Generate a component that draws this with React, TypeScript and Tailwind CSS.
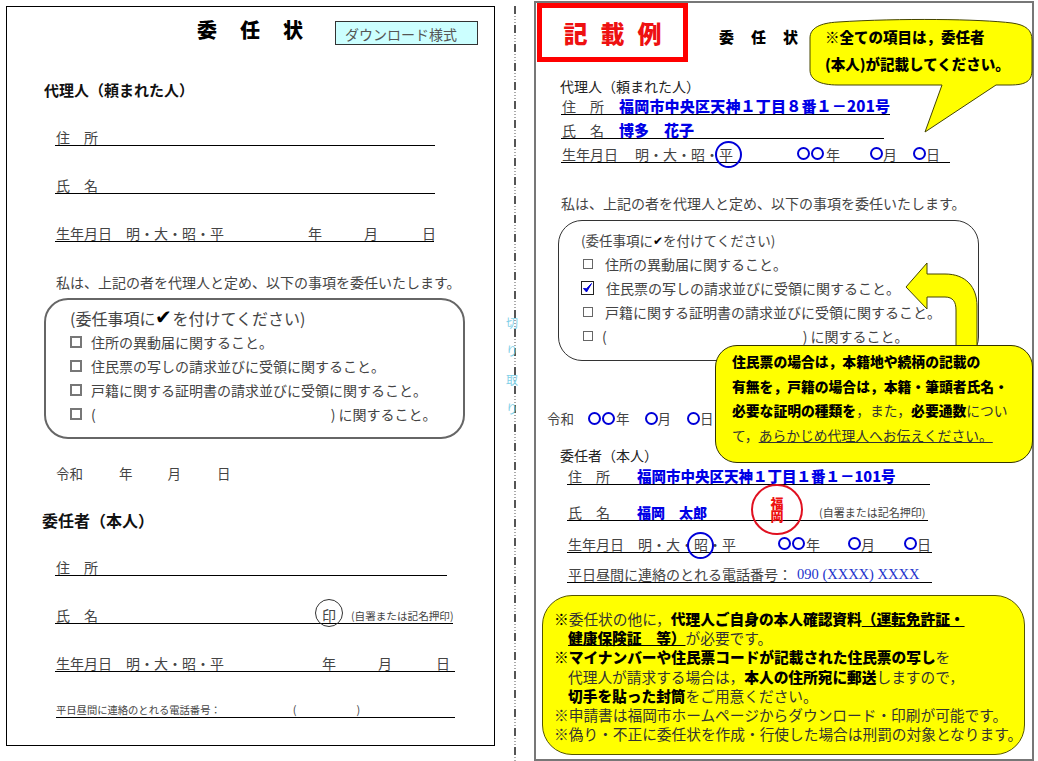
import React from "react";

function Line({ w, ml, mt, h, children }: { w: string; ml: string; mt: string; h: string; children: React.ReactNode }) {
  return <div className={`flex items-end ${w} ${ml} ${mt} ${h} border-b border-black text-[14px] leading-[16px] text-[#444] whitespace-pre`}>{children}</div>;
}

function Box() {
  return <span className="inline-block w-[12px] h-[12px] border-2 border-[#777] shrink-0" />;
}

function SmallBox() {
  return <span className="inline-block w-[10px] h-[10px] border border-[#666] shrink-0" />;
}

function Maru({ ml }: { ml: string }) {
  return <span className={`inline-block w-[13px] h-[13px] rounded-full border-2 border-[#0000d8] shrink-0 mb-[2px] ${ml}`} />;
}

function MaruC({ ml }: { ml: string }) {
  return <span className={`inline-block w-[13px] h-[13px] rounded-full border-2 border-[#0000d8] shrink-0 ${ml}`} />;
}

function Ring({ cls }: { cls: string }) {
  return <div className={`absolute rounded-full ${cls}`} />;
}

function Cut({ t, cls }: { t: string; cls: string }) {
  return <span className={`absolute left-[506px] text-[12px] leading-none text-[#7fd0e8] ${cls}`}>{t}</span>;
}

function B({ children }: { children: React.ReactNode }) {
  return <b className="font-black text-black">{children}</b>;
}

export default function App() {
  return (
    <div className="relative w-[1038px] h-[761px] overflow-hidden bg-white flex items-start font-['Noto_Sans_CJK_JP','Liberation_Sans',sans-serif]">
      {/* Left sheet */}
      <section className="ml-[6px] mt-[6px] w-[489px] h-[740px] border border-black shrink-0 flex flex-col">
        <div className="mt-[14px] h-[24px] flex items-center">
          <h1 className="ml-[190px] flex gap-[23px] text-[20px] font-black text-black leading-none -mt-[6px]">
            <span>委</span><span>任</span><span>状</span>
          </h1>
          <div className="ml-[32px] w-[143px] h-[24px] border border-[#333] bg-[#ccffff] text-[14px] leading-[24px] pl-[9px] text-[#555] whitespace-nowrap">ダウンロード様式</div>
        </div>
        <h2 className="ml-[37px] mt-[35px] h-[20px] text-[15px] leading-[20px] font-semibold text-[#111]">代理人（頼まれた人）</h2>
        <Line w="w-[380px]" ml="ml-[48px]" mt="mt-[24px]" h="h-[22px]"><span className="ml-px">住</span><span className="ml-[14px]">所</span></Line>
        <Line w="w-[380px]" ml="ml-[48px]" mt="mt-[26px]" h="h-[22px]"><span className="ml-px">氏</span><span className="ml-[14px]">名</span></Line>
        <Line w="w-[379px]" ml="ml-[48px]" mt="mt-[26px]" h="h-[22px]">
          <span className="ml-px">生年月日</span><span className="ml-[14px]">明・大・昭・平</span><span className="ml-[84px]">年</span><span className="ml-[42px]">月</span><span className="ml-[44px]">日</span>
        </Line>
        <p className="ml-[49px] mt-[30px] h-[20px] text-[14px] leading-[20px] text-[#444] whitespace-nowrap">私は、上記の者を代理人と定め、以下の事項を委任いたします。</p>
        <div className="ml-[37px] mt-[6px] w-[421px] h-[141px] border-2 border-[#666] rounded-[24px] pl-[24px] pt-[7px] text-[14px] text-[#444] flex flex-col shrink-0">
          <div className="flex items-center h-[22px] text-[16px] whitespace-nowrap">(委任事項に<span className="text-black text-[20px] leading-none -mt-[4px]">✔</span>を付けてください)</div>
          <div className="flex items-center h-[24px] mt-[1px] gap-[9px]"><Box />住所の異動届に関すること。</div>
          <div className="flex items-center h-[24px] gap-[9px]"><Box />住民票の写しの請求並びに受領に関すること。</div>
          <div className="flex items-center h-[24px] gap-[9px]"><Box />戸籍に関する証明書の請求並びに受領に関すること。</div>
          <div className="flex items-center h-[24px] gap-[9px]"><Box />(<span className="ml-[226px]">) に関すること。</span></div>
        </div>
        <div className="ml-[49px] mt-[24px] h-[20px] flex items-center text-[13.5px] text-[#444]"><span>令和</span><span className="ml-[36px]">年</span><span className="ml-[35px]">月</span><span className="ml-[36px]">日</span></div>
        <h2 className="ml-[35px] mt-[26px] h-[22px] text-[16px] leading-[22px] font-semibold text-[#111]">委任者（本人）</h2>
        <Line w="w-[392px]" ml="ml-[48px]" mt="mt-[23px]" h="h-[22px]"><span className="ml-px">住</span><span className="ml-[14px]">所</span></Line>
        <Line w="w-[398px]" ml="ml-[48px]" mt="mt-[26px]" h="h-[22px]">
          <span className="ml-px">氏</span><span className="ml-[14px]">名</span>
          <span className="ml-[224px]">印</span>
          <span className="ml-[15px] text-[10.6px] leading-[15px]">(自署または記名押印)</span>
        </Line>
        <Line w="w-[400px]" ml="ml-[48px]" mt="mt-[26px]" h="h-[22px]">
          <span className="ml-px">生年月日</span><span className="ml-[14px]">明・大・昭・平</span><span className="ml-[98px]">年</span><span className="ml-[42px]">月</span><span className="ml-[44px]">日</span>
        </Line>
        <Line w="w-[399px]" ml="ml-[49px]" mt="mt-[24px]" h="h-[22px]">
          <span className="text-[10.3px] leading-[15px]">平日昼間に連絡のとれる電話番号：</span><span className="ml-[72px] text-[11px] leading-[15px]">(</span><span className="ml-[60px] text-[11px] leading-[15px]">)</span>
        </Line>
      </section>

      {/* Cut line */}
      <div className="ml-[19px] mt-[6px] w-[2px] h-[755px] shrink-0 bg-[repeating-linear-gradient(to_bottom,#555_0,#555_8px,transparent_8px,transparent_10px,#aaa_10px,#aaa_11px,transparent_11px,transparent_13px,#aaa_13px,#aaa_14px,transparent_14px,transparent_16px,#aaa_16px,#aaa_17px,transparent_17px,transparent_19px)]" />

      {/* Right sheet */}
      <section className="ml-[18px] mt-[1px] w-[500px] h-[760px] border-2 border-[#777] shrink-0 flex flex-col">
        <div className="flex items-start h-[59px] shrink-0">
          <div className="ml-px w-[151px] h-[59px] border-[5px] border-[#ff0000] flex justify-center items-center gap-[13px] text-[24px] font-black text-[#ee1111] leading-none">
            <span>記</span><span>載</span><span>例</span>
          </div>
          <h1 className="ml-[31px] mt-[26px] flex gap-[17px] text-[15px] leading-none font-black text-black"><span>委</span><span>任</span><span>状</span></h1>
        </div>
        <h2 className="ml-[24px] mt-[15px] h-[18px] text-[14px] leading-[18px] text-[#222] shrink-0">代理人（頼まれた人）</h2>
        <Line w="w-[329px]" ml="ml-[25px]" mt="mt-0" h="h-[20px]"><span className="ml-px">住</span><span className="ml-[14px]">所</span><span className="ml-[15px] font-black text-[#0000e6] text-[15px] tracking-[0.2px]">福岡市中央区天神１丁目８番１－201号</span></Line>
        <Line w="w-[323px]" ml="ml-[25px]" mt="mt-0" h="h-[24px]"><span className="ml-px">氏</span><span className="ml-[14px]">名</span><span className="ml-[15px] font-black text-[#0000e6] text-[15px]">博多　花子</span></Line>
        <Line w="w-[389px]" ml="ml-[25px]" mt="mt-0" h="h-[24px]">
          <span className="ml-px">生年月日</span><span className="ml-[17px]">明・大・昭・平</span>
          <Maru ml="ml-[64px]" /><Maru ml="ml-px" /><span className="ml-[2px]">年</span>
          <Maru ml="ml-[30px]" /><span>月</span>
          <Maru ml="ml-[16px]" /><span>日</span>
        </Line>
        <p className="ml-[25px] mt-[30px] h-[20px] text-[14px] leading-[20px] text-[#444] whitespace-nowrap shrink-0">私は、上記の者を代理人と定め、以下の事項を委任いたします。</p>
        <div className="ml-[22px] mt-[7px] w-[421px] h-[141px] border-[1.5px] border-[#333] rounded-[24px] pl-[22px] pt-[8px] text-[14px] text-[#444] flex flex-col shrink-0">
          <div className="flex items-center h-[22px] text-[13.5px] whitespace-nowrap">(委任事項に<span className="text-black text-[12px] leading-none">✔</span>を付けてください)</div>
          <div className="flex items-center h-[24px] mt-[1px] pl-[2px] gap-[12px]"><SmallBox />住所の異動届に関すること。</div>
          <div className="flex items-center h-[24px] gap-[12px]">
            <svg width="13" height="14" viewBox="0 0 13 14" className="shrink-0"><rect x="0.5" y="0.5" width="12" height="13" fill="white" stroke="#222" /><path d="M2.5 7.5 L5.5 11 L10.5 2.5 L5.5 7.8 Z" fill="#0000d8" stroke="#0000d8" strokeWidth="1" /></svg>
            住民票の写しの請求並びに受領に関すること。
          </div>
          <div className="flex items-center h-[24px] pl-[2px] gap-[12px]"><SmallBox />戸籍に関する証明書の請求並びに受領に関すること。</div>
          <div className="flex items-center h-[24px] pl-[2px] gap-[9px]"><SmallBox />(<span className="ml-[187px]">) に関すること。</span></div>
        </div>
        <div className="ml-[11px] mt-[47px] h-[20px] flex items-center text-[13.5px] text-[#444] shrink-0 whitespace-pre">
          <span>令和</span><MaruC ml="ml-[14px]" /><MaruC ml="ml-px" /><span className="ml-px">年</span>
          <MaruC ml="ml-[15px]" /><span>月</span><MaruC ml="ml-[16px]" /><span>日</span>
        </div>
        <h2 className="ml-[24px] mt-[17px] h-[20px] text-[14px] leading-[20px] text-[#222] shrink-0">委任者（本人）</h2>
        <Line w="w-[363px]" ml="ml-[31px]" mt="mt-0" h="h-[20px]"><span className="ml-px">住</span><span className="ml-[14px]">所</span><span className="ml-[27px] font-black text-[#0000e6] text-[14.5px]">福岡市中央区天神１丁目１番１－101号</span></Line>
        <Line w="w-[361px]" ml="ml-[31px]" mt="mt-0" h="h-[36px]">
          <span className="ml-px">氏</span><span className="ml-[14px]">名</span><span className="ml-[27px] font-black text-[#0000e6]">福岡　太郎</span>
          <span className="ml-[112px] text-[11px] leading-[15px]">(自署または記名押印)</span>
        </Line>
        <Line w="w-[365px]" ml="ml-[31px]" mt="mt-0" h="h-[32px]">
          <span className="ml-px">生年月日</span><span className="ml-[14px]">明・大・昭・平</span>
          <Maru ml="ml-[42px]" /><Maru ml="ml-px" /><span className="ml-px">年</span>
          <Maru ml="ml-[28px]" /><span>月</span>
          <Maru ml="ml-[29px]" /><span>日</span>
        </Line>
        <Line w="w-[365px]" ml="ml-[31px]" mt="mt-0" h="h-[30px]">
          <span className="ml-px">平日昼間に連絡のとれる電話番号：</span>
          <span className="ml-[5px] font-['Liberation_Serif',serif] text-[#2233cc] text-[14.5px]">090 (XXXX) XXXX</span>
        </Line>
        <div className="ml-[6px] mt-[12px] w-[483px] h-[160px] bg-[#ffff00] border border-[#555500] rounded-[30px] pl-[11px] pt-[13px] text-[14.7px] leading-[19.2px] text-[#333] whitespace-nowrap shrink-0">
          <p><B>※</B>委任状の他に，<B>代理人ご自身の本人確認資料</B><B><span className="underline">（運転免許証・</span></B></p>
          <p className="pl-[14px]"><B><span className="underline">健康保険証　等）</span></B>が必要です。</p>
          <p><B>※マイナンバーや住民票コードが記載された住民票の写し</B>を</p>
          <p className="pl-[14px]">代理人が請求する場合は，<B>本人の住所宛に郵送</B>しますので，</p>
          <p className="pl-[14px]"><B>切手を貼った封筒</B>をご用意ください。</p>
          <p>※申請書は福岡市ホームページからダウンロード・印刷が可能です。</p>
          <p>※偽り・不正に委任状を作成・行使した場合は刑罰の対象となります。</p>
        </div>
      </section>

      {/* Overlays */}
      <Cut t="切" cls="top-[317px]" />
      <Cut t="り" cls="top-[345px]" />
      <Cut t="取" cls="top-[374px]" />
      <Cut t="り" cls="top-[403px]" />

      <Ring cls="left-[315px] top-[599px] w-[28px] h-[28px] border border-[#333]" />
      <Ring cls="left-[715px] top-[141px] w-[27px] h-[27px] border-2 border-[#0000d8]" />
      <Ring cls="left-[687px] top-[532px] w-[27px] h-[27px] border-2 border-[#0000d8]" />
      <Ring cls="left-[751px] top-[484px] w-[52px] h-[51px] border-2 border-[#e01020]" />
      <div className="absolute left-[770px] top-[496px] w-[14px] text-[13px] leading-[13px] font-black text-[#ee1111] text-center">福<br />岡</div>

      <svg className="absolute left-[805px] top-[18px]" width="233" height="125" viewBox="805 18 233 125">
        <path d="M838 22 C900 18 980 19 1012 23 C1026 25 1032 30 1032 40 L1032 70 C1032 81 1026 85 1010 85 L996 85 L925 132 L942 85 L838 85 C820 85 810 80 810 70 L810 38 C810 28 820 23 838 22 Z" fill="#ffff00" stroke="#444400" strokeWidth="1" />
      </svg>
      <div className="absolute left-[825px] top-[23px] text-[14.5px] leading-[27px] font-black text-black whitespace-nowrap">
        <div>※全ての項目は，委任者</div>
        <div>(本人)が記載してください。</div>
      </div>

      <svg className="absolute left-[900px] top-[258px]" width="85" height="95" viewBox="900 258 85 95">
        <path d="M906 287 L927 263 L927 274 L945 274 C966 274 977 287 977 306 L977 348 L956 348 L956 310 C956 302 953 297 945 297 L927 297 L927 309 Z" fill="#ffff00" stroke="#444400" strokeWidth="1" />
      </svg>

      <div className="absolute left-[715px] top-[345px] w-[318px] h-[118px] bg-[#ffff00] border border-[#333300] rounded-[22px] pl-[16px] pt-[3px] text-[13.8px] leading-[24.6px] text-[#333] whitespace-nowrap">
        <div><B>住民票の場合は，本籍地や続柄の記載の</B></div>
        <div><B>有無を，戸籍の場合は，本籍・筆頭者氏名・</B></div>
        <div><B>必要な証明の種類を</B>，また，<B>必要通数</B>につい</div>
        <div>て，<span className="underline">あらかじめ代理人へお伝えください。</span></div>
      </div>
    </div>
  );
}
